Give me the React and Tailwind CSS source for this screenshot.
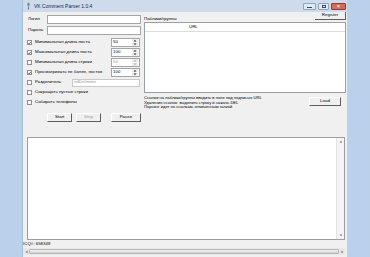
import React from "react";

const F = { fontFamily: '"Liberation Sans", Arial, sans-serif' };

function Check({ checked }) {
  return (
    <div className="w-[5px] h-[5px] bg-white border border-[#8e8f8f] flex items-center justify-center shrink-0">
      {checked && (
        <svg width="4" height="4" viewBox="0 0 4 4">
          <path d="M0.5 2 L1.5 3 L3.5 0.8" stroke="#111" strokeWidth="0.9" fill="none" />
        </svg>
      )}
    </div>
  );
}

function Spin({ value, disabled }) {
  return (
    <div className="w-[29px] h-[9px] bg-white border border-[#a5a5a5] flex items-center justify-between">
      <span className={"pl-[1px] leading-none " + (disabled ? "text-[#9a9a9a]" : "text-[#000]")}>{value}</span>
      <svg width="6" height="7" viewBox="0 0 6 7" className="mr-[1px]">
        <rect x="0" y="0" width="6" height="3.3" fill="#ececec" />
        <rect x="0" y="3.7" width="6" height="3.3" fill="#ececec" />
        <path d="M1.5 2.5 L3 1 L4.5 2.5Z" fill={disabled ? "#aaa" : "#222"} />
        <path d="M1.5 4.5 L3 6 L4.5 4.5Z" fill={disabled ? "#aaa" : "#222"} />
      </svg>
    </div>
  );
}

function Btn({ children, w, disabled }) {
  return (
    <div
      className={
        "h-[9px] bg-[#f0f0f0] border-t border-l border-t-white border-l-white border-r border-b border-r-[#5e5e5e] border-b-[#5e5e5e] flex items-center justify-center leading-none " +
        w +
        (disabled ? " text-[#a0a0a0]" : " text-[#000]")
      }
    >
      {children}
    </div>
  );
}

function Row({ checked, label, children }) {
  return (
    <div className="h-[9px] flex items-center">
      <div className="w-[12px] pl-[4px] flex items-center">
        <Check checked={checked} />
      </div>
      <div className="flex-1 flex items-center justify-between">
        <span className="leading-none whitespace-nowrap">{label}</span>
        {children}
      </div>
    </div>
  );
}

export default function App() {
  return (
    <div className="w-[370px] h-[257px] bg-[#b9d1ea] overflow-hidden text-[4.4px] text-[#000]" style={F}>
      <div className="ml-[22px] w-[325px] h-[257px] flex flex-col bg-[#f0f0f0] border-l border-[#a9bfd8]">
        {/* title bar */}
        <div className="h-[12px] bg-[#cddbea] flex items-center shrink-0">
          <svg width="5" height="8" viewBox="0 0 5 8" className="ml-[3px]">
            <path d="M2.5 0.5 C4 1.5 4 3 2.8 4 L3.2 7.5 L1.8 7.5 L2.2 4 C1 3 1 1.5 2.5 0.5Z" fill="#6d7f94" />
          </svg>
          <span className="ml-[3px] text-[5px] text-[#1b2a3c] leading-none">VK Comment Parser 1.0.4</span>
          <div className="flex-1" />
          <div className="flex items-start self-start mt-[3px] mr-[1px] gap-[2px]">
            <div className="w-[13px] h-[7px] rounded-[1px] border border-[#8ea4c0] bg-[#dfe8f3] flex items-center justify-center">
              <div className="w-[5px] h-[1px] bg-[#3a4a60] mt-[2px]" />
            </div>
            <div className="w-[11px] h-[7px] rounded-[1px] border border-[#8ea4c0] bg-[#dfe8f3] flex items-center justify-center">
              <div className="w-[4px] h-[3px] border border-[#3a4a60]" />
            </div>
            <div className="w-[15px] h-[7px] rounded-[1px] border border-[#9b3a35] bg-[#d46a5c] flex items-center justify-center">
              <span className="text-white text-[5px] leading-none font-bold">×</span>
            </div>
          </div>
        </div>

        {/* upper area */}
        <div className="flex h-[113px] shrink-0">
          {/* left column */}
          <div className="w-[118px] flex flex-col">
            <div className="mt-[3px] h-[9px] flex items-center">
              <span className="w-[24px] pl-[5px] leading-none">Логин</span>
              <div className="w-[94px] h-[9px] bg-white border border-[#a5a5a5]" />
            </div>
            <div className="mt-[2px] h-[9px] flex items-center">
              <span className="w-[24px] pl-[5px] leading-none">Пароль</span>
              <div className="w-[94px] h-[9px] bg-white border border-[#a5a5a5]" />
            </div>
            <div className="mt-[3px] flex flex-col gap-[1px] pr-[1px]">
              <Row checked label="Минимальная длина поста"><Spin value="50" /></Row>
              <Row checked label="Максимальная длина поста"><Spin value="100" /></Row>
              <Row label="Минимальная длина строки"><Spin value="50" disabled /></Row>
              <Row checked label="Просматривать не более, постов"><Spin value="100" /></Row>
              <Row label="Разделитель">
                <div className="w-[68px] h-[8px] bg-white border border-[#c8c8c8] flex items-center">
                  <span className="pl-[1px] text-[#9a9a9a] leading-none">edDelimiter</span>
                </div>
              </Row>
              <Row label="Сокращать пустые строки" />
              <Row label="Собирать телефоны" />
            </div>
            <div className="mt-[6px] flex pl-[24px] gap-[4px]">
              <Btn w="w-[26px]">Start</Btn>
              <Btn w="w-[25px]" disabled>Stop</Btn>
              <div className="w-[2px]" />
              <Btn w="w-[31px]">Pause</Btn>
            </div>
          </div>

          {/* right column */}
          <div className="ml-[3px] w-[202px] flex flex-col">
            <div className="h-[10px] flex items-end justify-between">
              <span className="leading-none mb-[1px]">Паблики/группы</span>
              <div className="w-[31px] h-[8px] mb-[2px] border-b border-r border-[#5e5e5e] flex items-center justify-center leading-none">Register</div>
            </div>
            <div className="h-[71px] bg-white border border-[#9a9ea6] flex flex-col">
              <div className="h-[9px] border-b border-[#dcdcdc] flex items-center">
                <span className="pl-[44px] leading-none">URL</span>
              </div>
            </div>
            <div className="mt-[3px] flex items-start justify-between">
              <div className="flex flex-col text-[4.1px] leading-[4.6px] whitespace-nowrap">
                <span>Ссылки на паблики/группы вводить в поле под подписью URL</span>
                <span>Удаление ссылок: выделить строку и нажать DEL</span>
                <span>Парсинг идет по ссылкам, отмеченным галкой</span>
              </div>
              <div className="mt-[1px] mr-[5px]">
                <Btn w="w-[32px]">Load</Btn>
              </div>
            </div>
          </div>
        </div>

        {/* memo */}
        <div className="mt-[12px] ml-[4px] mr-[2px] h-[103px] bg-white border border-[#9a9ea6] flex justify-end shrink-0">
          <div className="w-[8px] bg-[#f4f4f4] border-l border-[#e2e2e2] flex flex-col justify-between items-center py-[2px]">
            <svg width="4" height="3" viewBox="0 0 4 3"><path d="M0.5 2.5 L2 0.8 L3.5 2.5Z" fill="#777" /></svg>
            <svg width="4" height="3" viewBox="0 0 4 3"><path d="M0.5 0.5 L2 2.2 L3.5 0.5Z" fill="#777" /></svg>
          </div>
        </div>

        <div className="mt-[1px] h-[6px] flex items-center">
          <span className="leading-none">ICQ#: 658348</span>
        </div>

        <div className="mt-[1px] mr-[2px] h-[7px] bg-[#e8e8e8] flex items-center shrink-0">
          <div className="w-[6px] flex justify-center">
            <svg width="3" height="4" viewBox="0 0 3 4"><path d="M2.5 0.5 L0.7 2 L2.5 3.5Z" fill="#777" /></svg>
          </div>
          <div className="flex-1 h-[5px] rounded-[1px] bg-gradient-to-b from-[#f2f2f2] to-[#d4d4d4] border border-[#b5b5b5]" />
          <div className="w-[6px] flex justify-center">
            <svg width="3" height="4" viewBox="0 0 3 4"><path d="M0.5 0.5 L2.3 2 L0.5 3.5Z" fill="#777" /></svg>
          </div>
        </div>
      </div>
    </div>
  );
}
